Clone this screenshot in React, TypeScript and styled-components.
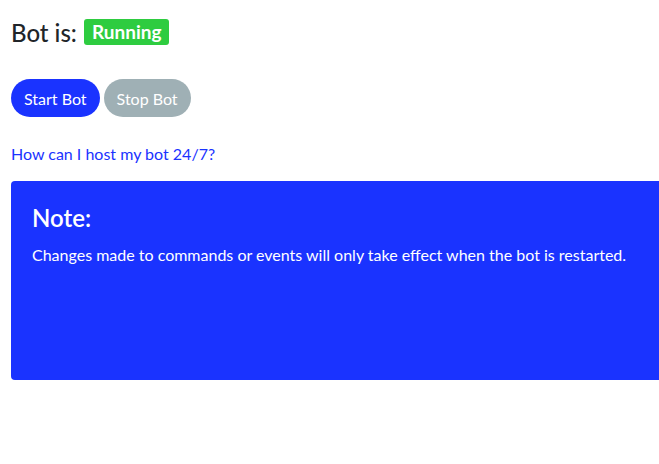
import styled, { createGlobalStyle } from 'styled-components';

const GlobalStyle = createGlobalStyle`
  html, body {
    margin: 0;
    padding: 0;
    background: #ffffff;
    overflow: hidden;
  }
  body {
    font-family: Lato, 'Noto Sans', sans-serif;
    color: #212529;
  }
`;

const Page = styled.div`
  padding: 16px 0 0 11px;
  width: 720px;
`;

const StatusTitle = styled.h2`
  margin: 0;
  font-size: 24px;
  font-weight: 500;
  display: flex;
  align-items: center;
  gap: 7px;
  height: 32px;
`;

const Badge = styled.span<{ $color: string }>`
  background: ${(p) => p.$color};
  color: #ffffff;
  font-size: 19px;
  font-weight: 700;
  border-radius: 3px;
  padding: 2px 8px;
  line-height: 22px;
`;

const ButtonRow = styled.div`
  display: flex;
  gap: 4px;
  margin-top: 31px;
`;

const PillButton = styled.button<{ $bg: string }>`
  background: ${(p) => p.$bg};
  color: #ffffff;
  border: none;
  border-radius: 19px;
  height: 38px;
  padding: 0 13px;
  font-family: inherit;
  font-size: 16px;
  cursor: pointer;
`;

const HelpLink = styled.a`
  display: block;
  margin-top: 26px;
  color: #1a33ff;
  font-size: 16px;
  text-decoration: none;
  line-height: 22px;
`;

const NoteBox = styled.div`
  margin-top: 16px;
  background: #1a33ff;
  color: #ffffff;
  border-radius: 4px 0 0 4px;
  height: 199px;
  box-sizing: border-box;
  padding: 24px 21px;
`;

const NoteTitle = styled.h3`
  margin: 0 0 13px;
  font-size: 24px;
  font-weight: 600;
  line-height: 26px;
`;

const NoteText = styled.p`
  margin: 0;
  font-size: 16px;
  line-height: 22px;
`;

export default function App() {
  return (
    <>
      <GlobalStyle />
      <Page>
        <StatusTitle>
          Bot is: <Badge $color="#2ecc40">Running</Badge>
        </StatusTitle>
        <ButtonRow>
          <PillButton $bg="#1a33ff">Start Bot</PillButton>
          <PillButton $bg="#9fb0b5">Stop Bot</PillButton>
        </ButtonRow>
        <HelpLink href="#">How can I host my bot 24/7?</HelpLink>
        <NoteBox>
          <NoteTitle>Note:</NoteTitle>
          <NoteText>
            Changes made to commands or events will only take effect when the bot is restarted.
          </NoteText>
        </NoteBox>
      </Page>
    </>
  );
}
